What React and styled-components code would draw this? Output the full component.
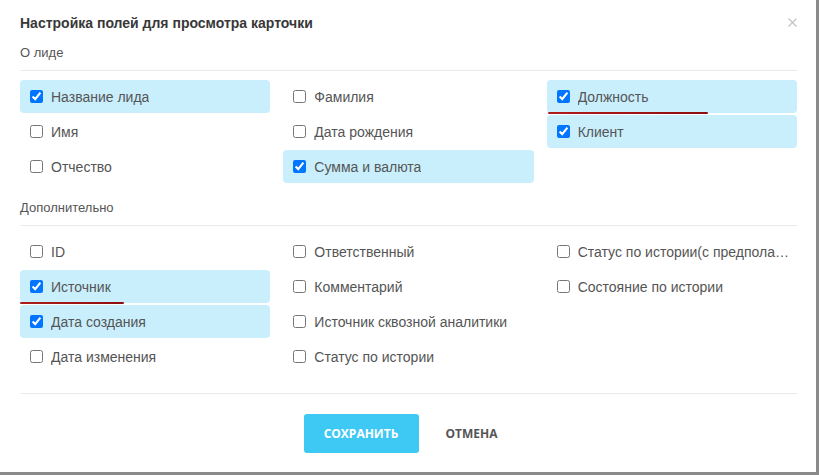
import React from 'react';
import styled, { createGlobalStyle } from 'styled-components';

const GlobalStyle = createGlobalStyle`
  body {
    margin: 0;
    background: #8a8a8a;
    font-family: "Liberation Sans", Arial, sans-serif;
  }
`;

const Modal = styled.div`
  width: 816px;
  height: 472px;
  box-sizing: border-box;
  padding: 0 19px 0 20px;
  background: #fff;
  display: flex;
  flex-direction: column;
`;

const Header = styled.div`
  height: 45px;
  display: flex;
  align-items: center;
  justify-content: space-between;
`;

const Title = styled.h2`
  margin: 0;
  font-size: 14px;
  font-weight: bold;
  color: #383838;
`;

const CloseButton = styled.button`
  border: 0;
  background: none;
  padding: 0;
  margin-right: -2px;
  width: 14px;
  height: 14px;
  display: flex;
  align-items: center;
  justify-content: center;
  cursor: pointer;
`;

const SectionLabel = styled.div`
  font-size: 13px;
  line-height: 16px;
  color: #555;
  margin-top: ${(p) => p.$top || 0}px;
  padding-bottom: 9px;
  border-bottom: 1px solid #ebebeb;
`;

const Grid = styled.div`
  display: grid;
  grid-template-columns: repeat(3, 1fr);
  grid-auto-flow: column;
  grid-template-rows: repeat(${(p) => p.$rows}, 33px);
  column-gap: 13px;
  row-gap: 2px;
  margin-top: 9px;
`;

const Item = styled.label`
  position: relative;
  display: flex;
  align-items: center;
  min-width: 0;
  padding: 0 8px 0 10px;
  border-radius: 4px;
  background: ${(p) => (p.$checked ? '#c9eefc' : 'transparent')};
  font-size: 14px;
  color: #555;
  cursor: pointer;

  &::after {
    content: '';
    display: ${(p) => (p.$mark ? 'block' : 'none')};
    position: absolute;
    left: ${(p) => (p.$markLeft || 0)}px;
    bottom: -1px;
    width: ${(p) => p.$mark || 0}px;
    height: 2px;
    border-radius: 1px;
    background: linear-gradient(90deg, #b01c1c, #8f0d0d);
  }
`;

const Box = styled.input`
  flex: none;
  width: 13px;
  height: 13px;
  margin: 0 8px 0 0;
  accent-color: #0075ff;
`;

const Caption = styled.span`
  white-space: nowrap;
  overflow: hidden;
  text-overflow: ellipsis;
`;

const Footer = styled.div`
  margin-top: 20px;
  border-top: 1px solid #ebebeb;
  padding-top: 20px;
  display: flex;
  justify-content: center;
  gap: 11px;
`;

const Button = styled.button`
  height: 39px;
  padding: 0 ${(p) => (p.$primary ? 20 : 16)}px;
  min-width: ${(p) => (p.$primary ? 115 : 0)}px;
  border: 0;
  border-radius: 3px;
  background: ${(p) => (p.$primary ? '#3ec8f4' : 'transparent')};
  color: ${(p) => (p.$primary ? '#fff' : '#555')};
  font-family: "Open Sans", sans-serif;
  font-size: 12px;
  font-weight: 700;
  text-transform: uppercase;
  cursor: pointer;
`;

const lead = [
  { label: 'Название лида', checked: true },
  { label: 'Имя' },
  { label: 'Отчество' },
  { label: 'Фамилия' },
  { label: 'Дата рождения' },
  { label: 'Сумма и валюта', checked: true },
  { label: 'Должность', checked: true, mark: 160, markLeft: 1 },
  { label: 'Клиент', checked: true },
  { empty: true },
];

const extra = [
  { label: 'ID' },
  { label: 'Источник', checked: true, mark: 104 },
  { label: 'Дата создания', checked: true },
  { label: 'Дата изменения' },
  { label: 'Ответственный' },
  { label: 'Комментарий' },
  { label: 'Источник сквозной аналитики' },
  { label: 'Статус по истории' },
  { label: 'Статус по истории(с предполагаемым)' },
  { label: 'Состояние по истории' },
  { empty: true },
  { empty: true },
];

function Field({ item }) {
  if (item.empty) return <div />;
  return (
    <Item $checked={item.checked} $mark={item.mark} $markLeft={item.markLeft}>
      <Box type="checkbox" defaultChecked={!!item.checked} />
      <Caption>{item.label}</Caption>
    </Item>
  );
}

export default function App() {
  return (
    <>
      <GlobalStyle />
      <Modal>
        <Header>
          <Title>Настройка полей для просмотра карточки</Title>
          <CloseButton aria-label="Закрыть">
            <svg width="9" height="9" viewBox="0 0 9 9">
              <path d="M0.5 0.5 L8.5 8.5 M8.5 0.5 L0.5 8.5" stroke="#c4c4c4" strokeWidth="1.2" />
            </svg>
          </CloseButton>
        </Header>
        <SectionLabel>О лиде</SectionLabel>
        <Grid $rows={3}>
          {lead.map((item, i) => (
            <Field key={i} item={item} />
          ))}
        </Grid>
        <SectionLabel $top={17}>Дополнительно</SectionLabel>
        <Grid $rows={4}>
          {extra.map((item, i) => (
            <Field key={i} item={item} />
          ))}
        </Grid>
        <Footer>
          <Button $primary>Сохранить</Button>
          <Button>Отмена</Button>
        </Footer>
      </Modal>
    </>
  );
}
